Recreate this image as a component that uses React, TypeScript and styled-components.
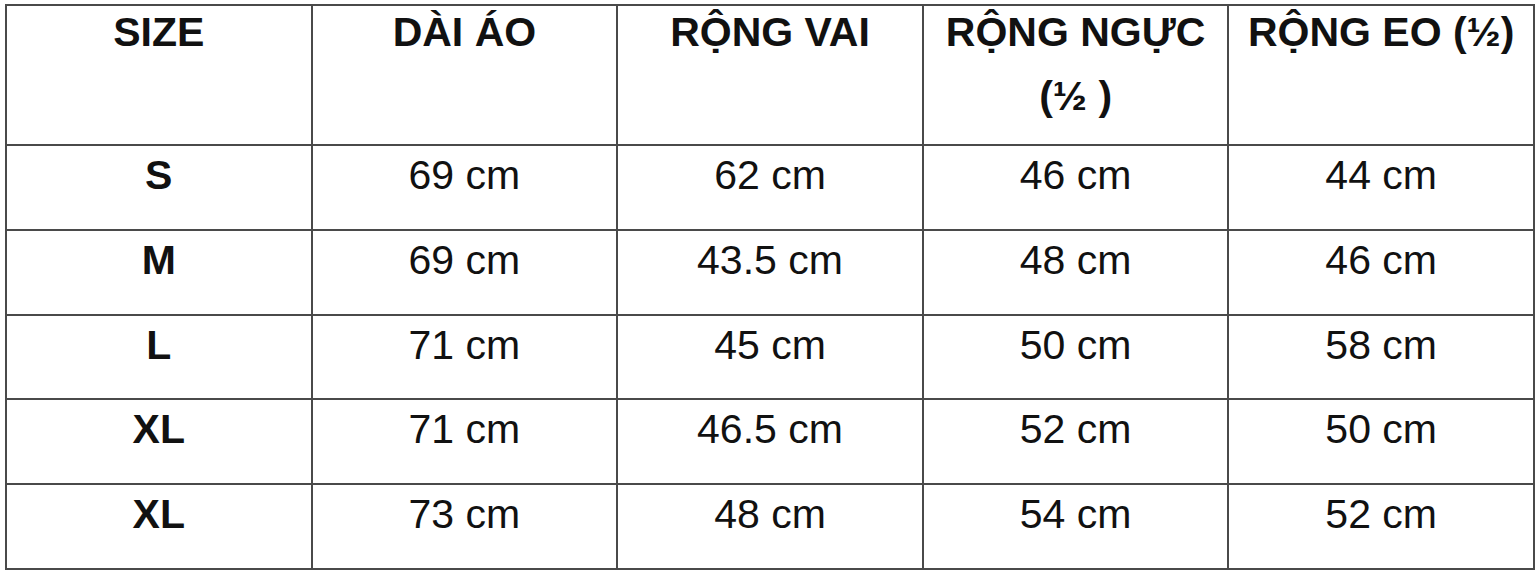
import React from "react";
import styled, { createGlobalStyle } from "styled-components";

interface SizeRow {
  size: string;
  length: string;
  shoulder: string;
  chest: string;
  waist: string;
}

const headers: string[][] = [
  ["SIZE"],
  ["DÀI ÁO"],
  ["RỘNG VAI"],
  ["RỘNG NGỰC", "(½ )"],
  ["RỘNG EO (½)"],
];

const rows: SizeRow[] = [
  { size: "S", length: "69 cm", shoulder: "62 cm", chest: "46 cm", waist: "44 cm" },
  { size: "M", length: "69 cm", shoulder: "43.5 cm", chest: "48 cm", waist: "46 cm" },
  { size: "L", length: "71 cm", shoulder: "45 cm", chest: "50 cm", waist: "58 cm" },
  { size: "XL", length: "71 cm", shoulder: "46.5 cm", chest: "52 cm", waist: "50 cm" },
  { size: "XL", length: "73 cm", shoulder: "48 cm", chest: "54 cm", waist: "52 cm" },
];

const GlobalStyle = createGlobalStyle`
  html, body {
    margin: 0;
    padding: 0;
    background: #ffffff;
  }
  body {
    font-family: "Liberation Sans", Arial, sans-serif;
    color: #111111;
  }
`;

const Page = styled.div`
  width: 1540px;
  height: 578px;
  box-sizing: border-box;
  padding: 4px 0 0 5px;
  background: #ffffff;
`;

/* lines are the grid background showing through the gaps */
const SizeTable = styled.div`
  display: grid;
  grid-template-columns: repeat(5, 1fr);
  grid-template-rows: 138px repeat(5, 1fr);
  gap: 2px;
  padding: 2px;
  width: 1530px;
  height: 566px;
  box-sizing: border-box;
  background: #4a4a4a;
`;

const HeadCell = styled.div`
  background: #ffffff;
  display: flex;
  flex-direction: column;
  align-items: center;
  gap: 18px;
  padding-top: 3px;
  font-size: 41px;
  line-height: 46px;
  font-weight: 700;
  white-space: nowrap;
`;

const Cell = styled.div<{ $bold?: boolean }>`
  background: #ffffff;
  display: flex;
  justify-content: center;
  padding-top: 6px;
  font-size: 41px;
  line-height: 46px;
  font-weight: ${(p) => (p.$bold ? 700 : 400)};
  white-space: nowrap;
`;

export default function App() {
  return (
    <>
      <GlobalStyle />
      <Page>
        <SizeTable>
          {headers.map((lines, i) => (
            <HeadCell key={i}>
              {lines.map((l) => (
                <span key={l}>{l}</span>
              ))}
            </HeadCell>
          ))}
          {rows.map((r, i) => (
            <React.Fragment key={i}>
              <Cell $bold>{r.size}</Cell>
              <Cell>{r.length}</Cell>
              <Cell>{r.shoulder}</Cell>
              <Cell>{r.chest}</Cell>
              <Cell>{r.waist}</Cell>
            </React.Fragment>
          ))}
        </SizeTable>
      </Page>
    </>
  );
}
